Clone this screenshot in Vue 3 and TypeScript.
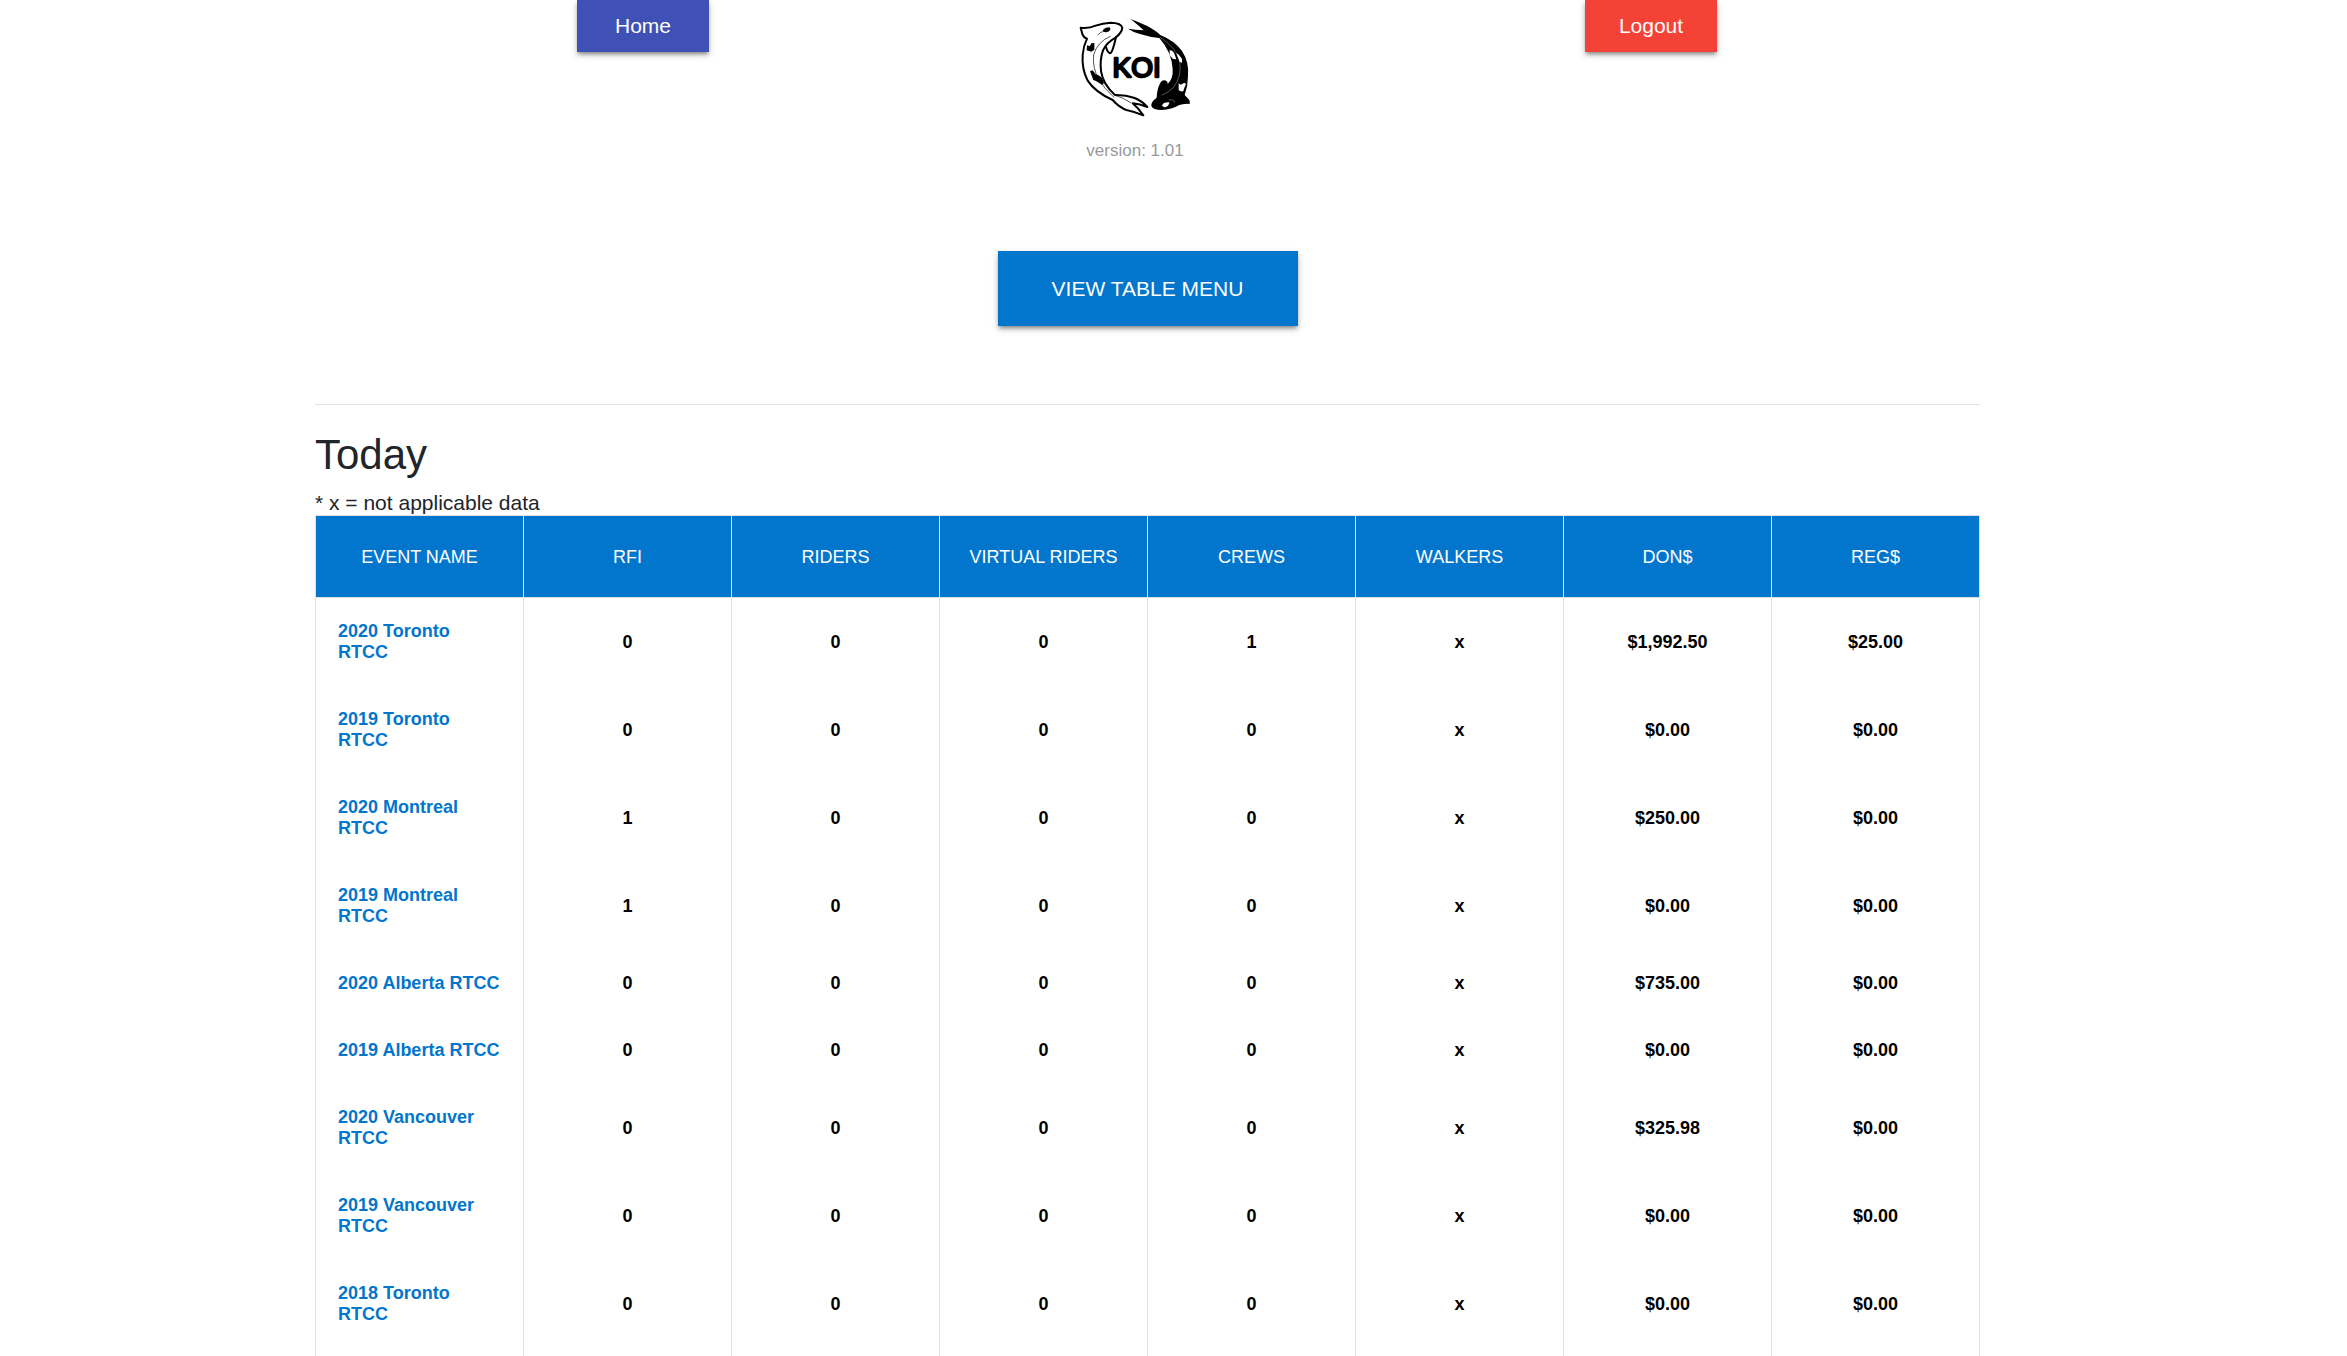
<script setup lang="ts">
interface EventRow {
  name: string
  values: string[]
}

const columns: string[] = ['Event Name', 'RFI', 'Riders', 'Virtual Riders', 'Crews', 'Walkers', 'Don$', 'Reg$']

const rows: EventRow[] = [
  { name: '2020 Toronto RTCC', values: ['0', '0', '0', '1', 'x', '$1,992.50', '$25.00'] },
  { name: '2019 Toronto RTCC', values: ['0', '0', '0', '0', 'x', '$0.00', '$0.00'] },
  { name: '2020 Montreal RTCC', values: ['1', '0', '0', '0', 'x', '$250.00', '$0.00'] },
  { name: '2019 Montreal RTCC', values: ['1', '0', '0', '0', 'x', '$0.00', '$0.00'] },
  { name: '2020 Alberta RTCC', values: ['0', '0', '0', '0', 'x', '$735.00', '$0.00'] },
  { name: '2019 Alberta RTCC', values: ['0', '0', '0', '0', 'x', '$0.00', '$0.00'] },
  { name: '2020 Vancouver RTCC', values: ['0', '0', '0', '0', 'x', '$325.98', '$0.00'] },
  { name: '2019 Vancouver RTCC', values: ['0', '0', '0', '0', 'x', '$0.00', '$0.00'] },
  { name: '2018 Toronto RTCC', values: ['0', '0', '0', '0', 'x', '$0.00', '$0.00'] },
]
</script>

<template>
  <div class="page">
    <main class="content">
      <header class="top">
        <button type="button" class="btn btn-home">Home</button>
        <div class="brand">
          <svg class="logo" viewBox="0 0 450 390" role="img" aria-label="KOI">
            <!-- light koi -->
            <g fill="none" stroke="#000" stroke-linejoin="round" stroke-linecap="round">
              <path fill="#fff" stroke-width="6" d="M62 83 Q86 86 107 77 Q128 69 152 68 Q184 68 187 84 Q185 98 168 112 Q139 128 129 151 Q119 178 123 213 Q129 254 165 285 Q196 284 224 294 Q246 303 262 321 Q240 312 218 310 Q236 325 250 346 Q226 336 202 331 Q178 323 158 300 Q106 277 83 242 Q65 207 68 165 Q70 139 81 116 Q69 112 66 98 Z" />
              <path stroke-width="6" d="M168 111 Q164 130 159 145 Q155 159 150 160 Q142 156 138 141" />
              <path stroke-width="2" d="M151 109 Q111 126 101 165 Q97 205 116 236 Q132 267 162 292 M114 104 Q121 96 130 94 M165 286 Q190 293 212 308" />
            </g>
            <path d="M128 93 Q132 82 148 82 Q155 86 147 94 Q137 100 128 93Z M81 136 L90 138 L94 130 L103 129 L103 149 L94 155 L80 151Z M90 214 L98 211 L107 223 Q126 227 132 249 L126 255 Q108 242 100 240Z" />
            <!-- dark koi -->
            <path d="M212 57 Q235 66 262 78 Q289 93 301 105 Q345 123 366 153 Q388 186 384 229 Q384 258 374 285 L388 300 L390 311 Q371 311 358 315 Q335 329 305 330 Q279 330 274 318 Q272 306 290 293 Q291 266 302 247 Q310 236 322 245 L323 252 Q340 236 338 208 Q336 157 298 114 Q267 111 240 102 Q222 98 204 86 Q226 90 251 91 Q235 76 212 57Z" />
            <g fill="#fff">
              <path d="M329 150 Q337 151 342 158 L349 178 L339 177 L329 166Z M349 160 L355 163 L366 176 L366 188 L359 186Z M356 250 L362 254 L373 248 L378 252 L372 266 L370 274 Q359 276 356 269Z M306 317 Q309 306 328 307 Q327 320 313 322Z" />
            </g>
            <path fill="none" stroke="#fff" stroke-width="1" d="M300 112 Q349 143 359 183 Q366 232 339 264 Q326 277 305 286 M326 300 Q343 297 344 308" />
            <text x="230" y="231" text-anchor="middle" class="logo-text">KOI</text>
          </svg>
          <p class="version">version: 1.01</p>
        </div>
        <button type="button" class="btn btn-logout">Logout</button>
      </header>

      <button type="button" class="btn btn-menu">VIEW TABLE MENU</button>

      <hr class="rule" />

      <h2 class="title">Today</h2>
      <p class="note">* x = not applicable data</p>

      <table class="events">
        <thead>
          <tr>
            <th v-for="column in columns" :key="column" scope="col">{{ column }}</th>
          </tr>
        </thead>
        <tbody>
          <tr v-for="row in rows" :key="row.name">
            <td class="event"><a href="#">{{ row.name }}</a></td>
            <td v-for="(value, i) in row.values" :key="i">{{ value }}</td>
          </tr>
          <tr aria-hidden="true">
            <td v-for="column in columns" :key="column"></td>
          </tr>
        </tbody>
      </table>
    </main>
  </div>
</template>

<style>
body {
  background: #fff;
}
html {
  overflow: hidden;
}
</style>

<style scoped>
.page {
  box-sizing: border-box;
  height: 100vh;
  overflow: hidden;
  padding-right: 52px;
  font-family: "Liberation Sans", Arial, sans-serif;
  font-size: 21px;
  color: #212529;
}
.content {
  width: 90%;
  max-width: 1665px;
  margin: 0 auto;
}
.top {
  display: flex;
  justify-content: space-between;
  align-items: flex-start;
  padding: 0 263px 0 262px;
}
.btn {
  display: block;
  border: 0;
  padding: 0;
  width: 132px;
  height: 52px;
  font: inherit;
  color: #fff;
  cursor: pointer;
  box-shadow: 0 3px 4px -1px rgba(0, 0, 0, 0.4), 0 3px 8px rgba(0, 0, 0, 0.16);
}
.btn-home {
  background: #3f51b5;
}
.btn-logout {
  background: #f44336;
}
.btn-menu {
  width: 300px;
  height: 75px;
  margin: 88px auto 78px;
  background: #0275cc;
}
.brand {
  padding-right: 24px;
  text-align: center;
}
.logo {
  display: block;
  width: 150px;
  height: 130px;
}
.logo-text {
  font-family: "Liberation Sans", Arial, sans-serif;
  font-size: 84px;
  stroke: #000;
  stroke-width: 7px;
  stroke-linejoin: round;
}
.version {
  margin: 8px 0 0;
  font-size: 17px;
  line-height: 25px;
  color: #999;
}
.rule {
  margin: 0 0 25px;
  border: 0;
  border-top: 1px solid #e2e2e2;
}
.title {
  margin: 0 0 11px;
  font-size: 42px;
  font-weight: 400;
  line-height: 50px;
}
.note {
  margin: 0;
  line-height: 24px;
}
.events {
  width: 100%;
  table-layout: fixed;
  border-collapse: collapse;
  font-size: 18px;
  line-height: 21px;
}
.events th {
  height: 79px;
  padding: 2px 0 0;
  border: 1px solid #dee2e6;
  background: #0275cc;
  color: #fff;
  font-weight: 400;
  text-transform: uppercase;
}
.events td {
  padding: 23px 22px;
  border-left: 1px solid #dfdfdf;
  border-right: 1px solid #dfdfdf;
  color: #000;
  font-weight: 700;
  text-align: center;
}
.events .event {
  text-align: left;
}
.event a {
  color: #0275cc;
  text-decoration: none;
}
</style>
